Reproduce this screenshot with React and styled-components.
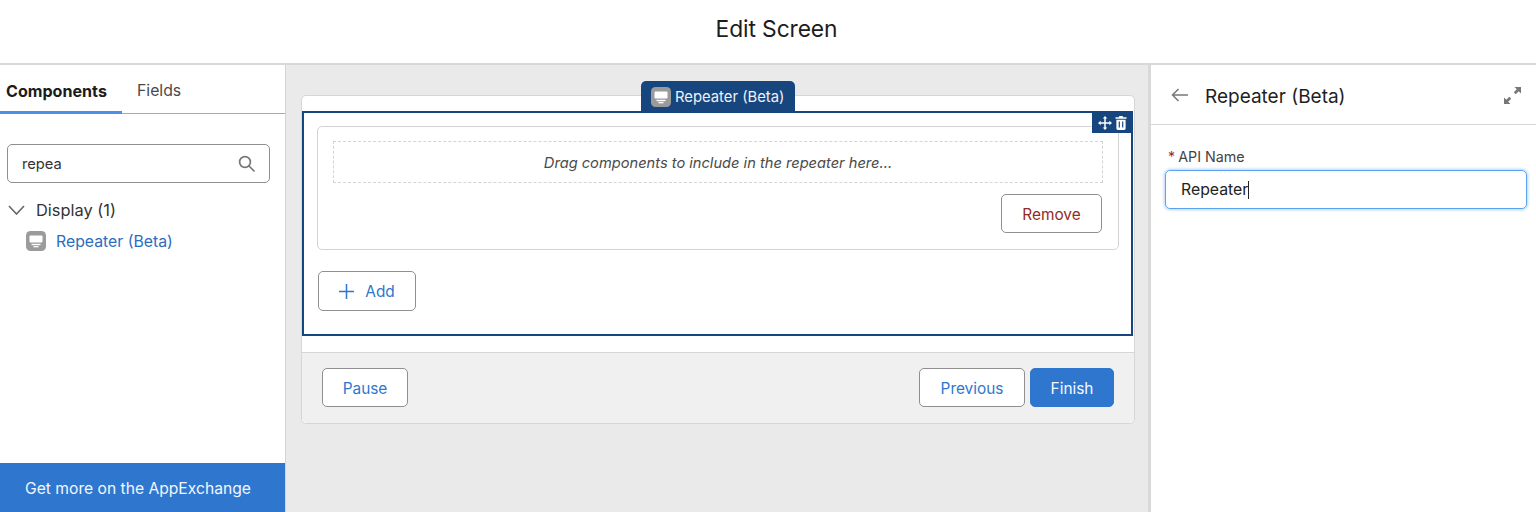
import React from "react";
import styled, { createGlobalStyle } from "styled-components";

const Global = createGlobalStyle`
  html, body { margin: 0; padding: 0; background: #fff; }
  body { font-family: Inter, "Liberation Sans", sans-serif; color: #1f1f1f; }
  * { box-sizing: border-box; }
`;
const Page = styled.div`
  width: 1536px; height: 512px; display: flex; flex-direction: column; overflow: hidden;
`;
const Header = styled.header`
  height: 65px; flex: none; background: #fff; border-bottom: 2px solid #d8d8d8;
  display: flex; align-items: center; justify-content: center;
  padding: 0 0 6px 17px; font-size: 22.8px; font-weight: 400; color: #1c1c1c; letter-spacing: -0.1px;
`;
const Body = styled.div`
  flex: 1; display: flex; min-height: 0;
`;
const LeftPanel = styled.aside`
  width: 286px; flex: none; background: #fff; border-right: 1px solid #d4d4d4;
  display: flex; flex-direction: column;
`;
const Tabs = styled.div`
  height: 49px; flex: none; display: flex; align-items: stretch; border-bottom: 1px solid #a9a9a9;
`;
const Tab = styled.div`
  display: flex; align-items: center;
  width: ${p => (p.$active ? "122px" : "auto")};
  padding: 5px 0 0 ${p => (p.$active ? "6px" : "15px")};
  font-size: ${p => (p.$active ? "16.1px" : "15.8px")};
  font-weight: ${p => (p.$active ? 700 : 400)};
  color: ${p => (p.$active ? "#1c1c1c" : "#4a4a4a")};
  height: 49px;
  border-bottom: 3px solid ${p => (p.$active ? "#4c90ea" : "transparent")};
`;
const SearchBox = styled.div`
  margin: 30px 15px 0 7px; height: 39px; border: 1px solid #8f8f8f; border-radius: 5px;
  display: flex; align-items: center; justify-content: space-between;
  padding: 0 14px 0 14px; font-size: 14.7px; color: #333;
`;
const Group = styled.div`
  margin: 17px 0 0 8px; display: flex; align-items: center; gap: 11px;
  font-size: 16.4px; color: #333; height: 20px;
`;
const Item = styled.div`
  margin: 11px 0 0 26px; display: flex; align-items: center; gap: 10px;
  font-size: 15.8px; color: #2d6dbf; height: 20px;
`;
const Spacer = styled.div`flex: 1;`;
const Exchange = styled.div`
  height: 49px; flex: none; background: #2f76cf; color: #f2f6fc;
  display: flex; align-items: center; padding: 2px 0 0 25px; font-size: 15.65px;
`;
const Middle = styled.main`
  flex: 1; background: #ebeaea; padding: 30px 13px 0 15px; min-width: 0;
`;
const Card = styled.div`
  position: relative; height: 329px; background: #fff; border: 1px solid #d6d6d6; border-radius: 5px;
  display: flex; flex-direction: column; padding-top: 15px;
`;
const Selected = styled.div`
  position: relative; height: 225px; margin-right: 1px; border: 2px solid #17467f;
  padding: 13px 12px 0 13px;
`;
const LabelTab = styled.div`
  position: absolute; left: 339px; top: -15px; width: 154px; height: 31px;
  background: #17467f; border-radius: 5px 5px 0 0; color: #eef2f7;
  display: flex; align-items: center; gap: 4px; padding: 0 0 0 10px; font-size: 14.8px;
`;
const Tools = styled.div`
  position: absolute; right: -2px; top: -1px; width: 41px; height: 21px; background: #17467f;
  display: flex; align-items: center; justify-content: center; gap: 3px; padding-right: 1px;
`;
const RepeatBox = styled.div`
  height: 124px; border: 1px solid #d4d4d4; border-radius: 5px; padding: 14px 15px 0 15px;
  display: flex; flex-direction: column;
`;
const DropZone = styled.div`
  height: 42px; border: 1px dashed #d4d4d4; display: flex; align-items: center; justify-content: center;
  padding-top: 1px; font-size: 14.65px; font-style: italic; color: #4a4a4a;
`;
const RemoveRow = styled.div`
  display: flex; justify-content: flex-end; margin-top: 11px; padding-right: 1px;
`;
const Button = styled.button`
  width: ${p => p.$w}px; height: 39px; border-radius: 5px;
  border: 1px solid ${p => (p.$primary ? "#2f76cf" : "#8f8f8f")};
  background: ${p => (p.$primary ? "#2f76cf" : "#fff")};
  color: ${p => p.$color || (p.$primary ? "#f6f9fd" : "#2f76cf")};
  font-family: inherit; font-size: 15.4px; padding: 1px 0 0;
  display: flex; align-items: center; justify-content: center; gap: ${p => p.$gap || 0}px;
`;
const AddRow = styled.div`
  margin: 21px 0 0 1px;
`;
const AddButton = styled(Button)`
  height: 40px;
`;
const Footer = styled.div`
  margin-top: 16px; flex: 1; background: #f0f0f0; border-top: 1px solid #d6d6d6; border-radius: 0 0 5px 5px;
  display: flex; align-items: center; justify-content: space-between; padding: 0 20px 1px;
`;
const FooterRight = styled.div`display: flex; gap: 5px;`;
const RightPanel = styled.aside`
  width: 388px; flex: none; background: #fff; border-left: 3px solid #d9d9d9; display: flex; flex-direction: column;
`;
const PanelHead = styled.div`
  height: 60px; flex: none; border-bottom: 1px solid #d6d6d6; display: flex; align-items: center;
  padding: 1px 15px 0 20px; font-size: 19px; color: #1f1f1f;
`;
const PanelTitle = styled.div`margin-left: 17px; padding-top: 3px; flex: 1;`;
const Form = styled.div`padding: 24px 9px 0 14px;`;
const FieldLabel = styled.div`
  font-size: 14.3px; color: #444; display: flex; gap: 3px; height: 15px; align-items: center; padding-left: 3px;
`;
const Star = styled.span`color: #b3261e;`;
const Input = styled.div`
  margin-top: 6px; height: 39px; border: 1.5px solid #59a3f2; border-radius: 5px;
  box-shadow: 0 0 3px 1px #b3d5fa; padding-left: 15px;
  display: flex; align-items: center; font-size: 15.8px; color: #222;
`;
const Caret = styled.span`
  display: inline-block; width: 1px; height: 18px; background: #222;
`;

const RepeaterIcon = ({ size = 20 }) => (
  <svg width={size} height={size} viewBox="0 0 20 20">
    <rect width="20" height="20" rx="4.5" fill="#9b9b9b" />
    <rect x="3.5" y="4.5" width="13" height="7" rx="1" fill="#fff" />
    <rect x="5.5" y="12.8" width="9" height="1.4" fill="#fff" />
    <rect x="7.5" y="15" width="5" height="1.3" fill="#fff" />
  </svg>
);

export default function App() {
  return (
    <Page>
      <Global />
      <Header>Edit Screen</Header>
      <Body>
        <LeftPanel>
          <Tabs>
            <Tab $active>Components</Tab>
            <Tab>Fields</Tab>
          </Tabs>
          <SearchBox>
            repea
            <svg width="17" height="17" viewBox="0 0 17 17" fill="none" stroke="#777" strokeWidth="1.7">
              <circle cx="7" cy="7" r="5.4" />
              <path d="M11 11l5 5" strokeLinecap="round" />
            </svg>
          </SearchBox>
          <Group>
            <svg width="17" height="10" viewBox="0 0 17 10" fill="none" stroke="#666" strokeWidth="1.6">
              <path d="M1 1l7.5 8L16 1" />
            </svg>
            Display (1)
          </Group>
          <Item>
            <RepeaterIcon />
            Repeater (Beta)
          </Item>
          <Spacer />
          <Exchange>Get more on the AppExchange</Exchange>
        </LeftPanel>
        <Middle>
          <Card>
            <LabelTab>
              <RepeaterIcon />
              Repeater (Beta)
            </LabelTab>
            <Selected>
              <Tools>
                <svg width="14" height="14" viewBox="0 0 15 15" fill="#fff">
                  <path d="M7.5 0l2.4 2.8H8.3v3.9h3.9V5.1L15 7.5l-2.8 2.4V8.3H8.3v3.9h1.6L7.5 15l-2.4-2.8h1.6V8.3H2.8v1.6L0 7.5l2.8-2.4v1.6h3.9V2.8H5.1z" />
                </svg>
                <svg width="12" height="14" viewBox="0 0 13 15" fill="#fff">
                  <path d="M4.5 0h4v1.4h4V3H.5V1.4h4z" />
                  <path fillRule="evenodd" d="M1.5 4h10v9.5a1.5 1.5 0 0 1-1.5 1.5H3a1.5 1.5 0 0 1-1.5-1.5zM4 6v6.5h1.3V6zm3.7 0v6.5H9V6z" />
                </svg>
              </Tools>
              <RepeatBox>
                <DropZone>Drag components to include in the repeater here...</DropZone>
                <RemoveRow>
                  <Button $w={101} $color="#962b26">Remove</Button>
                </RemoveRow>
              </RepeatBox>
              <AddRow>
                <AddButton $w={98} $gap={11}>
                  <svg width="15" height="15" viewBox="0 0 15 15" stroke="#2f76cf" strokeWidth="1.5">
                    <path d="M7.5 0v15M0 7.5h15" />
                  </svg>
                  Add
                </AddButton>
              </AddRow>
            </Selected>
            <Footer>
              <Button $w={86}>Pause</Button>
              <FooterRight>
                <Button $w={106}>Previous</Button>
                <Button $w={84} $primary>Finish</Button>
              </FooterRight>
            </Footer>
          </Card>
        </Middle>
        <RightPanel>
          <PanelHead>
            <svg width="17" height="14" viewBox="0 0 17 14" fill="none" stroke="#777" strokeWidth="1.5">
              <path d="M17 7H1.5M7.5 1L1.5 7l6 6" />
            </svg>
            <PanelTitle>Repeater (Beta)</PanelTitle>
            <svg width="17" height="17" viewBox="0 0 17 17" fill="#777">
              <path d="M10.5 0H17v6.5l-2.3-2.3-3 3-1.9-1.9 3-3zM6.5 17H0v-6.5l2.3 2.3 3-3 1.9 1.9-3 3z" />
            </svg>
          </PanelHead>
          <Form>
            <FieldLabel><Star>*</Star>API Name</FieldLabel>
            <Input>Repeater<Caret /></Input>
          </Form>
        </RightPanel>
      </Body>
    </Page>
  );
}
